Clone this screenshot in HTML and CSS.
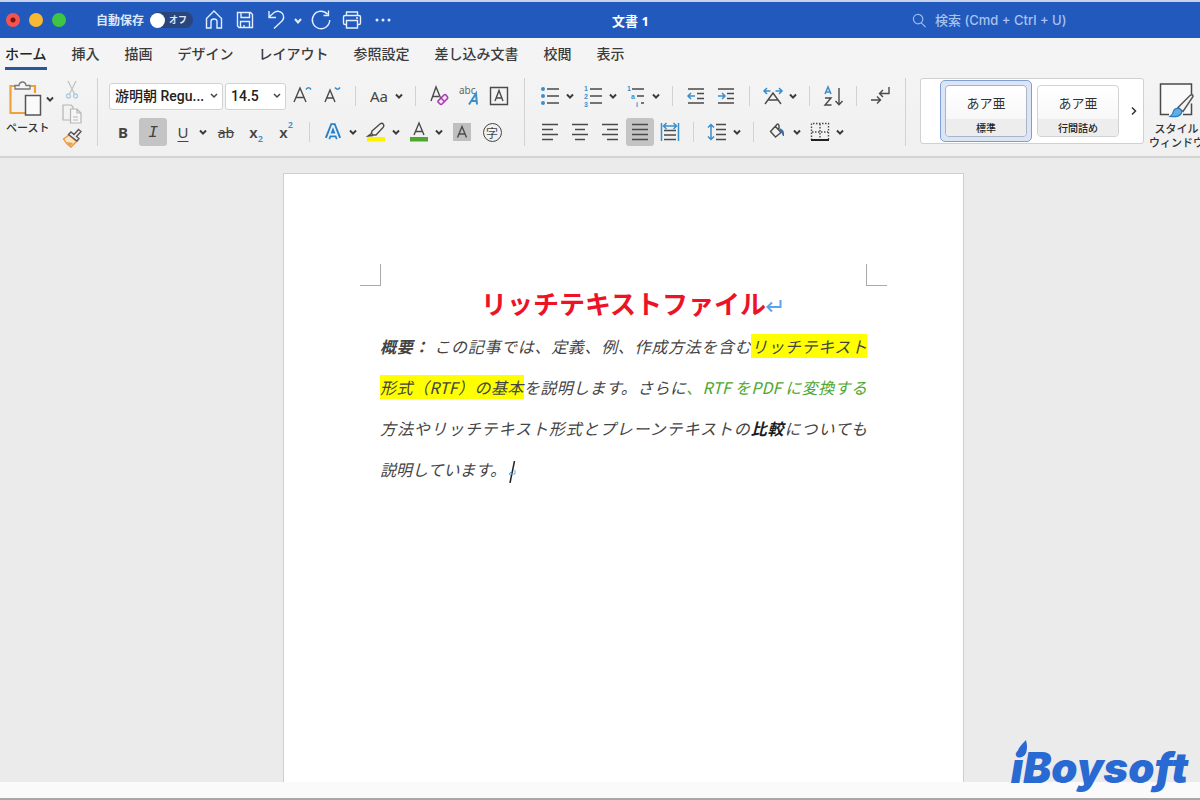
FILE: index.html
```html
<!DOCTYPE html>
<html lang="ja">
<head>
<meta charset="utf-8">
<title>文書 1</title>
<link rel="stylesheet" href="styles.css">
</head>
<body>
<svg class="defs" aria-hidden="true">
  <symbol id="chev" viewBox="-6 -14 12 28"><path d="M-3 -1.5L0 1.6L3 -1.5" fill="none" stroke="#3a3a3a" stroke-width="2"/></symbol>
</svg>

<header class="titlebar">
  <div class="lights">
    <button class="light red" aria-label="閉じる"></button>
    <button class="light yellow" aria-label="しまう"></button>
    <button class="light green" aria-label="拡大"></button>
  </div>
  <label class="autosave">自動保存
    <span class="switch"><input type="checkbox" role="switch"><span class="off">オフ</span></span>
  </label>
  <div class="quick">
    <button class="q" aria-label="ホーム"><svg viewBox="-12 -12 24 24"><path d="M-7.5 8V-1.5L0 -9L7.5 -1.5V8H3V1.5Q3 -1 0 -1Q-3 -1 -3 1.5V8Z"/></svg></button>
    <button class="q" aria-label="保存"><svg viewBox="-12 -12 24 24"><path d="M-7.5 -7.5H5.5L7.5 -5.5V7.5H-6L-7.5 6ZM-4 -7.5V-2.5H4.5V-7.5M-4.5 7.5V1.5H4.5V7.5M-1 7V5"/></svg></button>
    <button class="q" aria-label="元に戻す"><svg viewBox="-12 -12 24 24"><path d="M-7 -9V-2.5H0M-7 -3L-2 -7.5Q3 -10.5 6.500 -6.500Q9 -2.500 6 1L-2 8.5"/></svg></button>
    <button class="q narrow" aria-label="元に戻すの履歴"><svg viewBox="-6 -12 12 24"><path class="thick" d="M-3 -1L0 2.5L3 -1"/></svg></button>
    <button class="q" aria-label="やり直し"><svg viewBox="-12 -12 24 24"><path d="M6.500 -5.800A8.700 8.700 0 1 0 8.700 0M7.5 -9.500V-4.500H2.5"/></svg></button>
    <button class="q" aria-label="印刷"><svg viewBox="-12 -12 24 24"><path d="M-5.5 -4.5V-8H5.5V-4.5M-5.5 4.5H-7Q-8.5 4.5 -8.5 3V-3Q-8.5 -4.5 -7 -4.5H7Q8.5 -4.5 8.5 -3V3Q8.5 4.5 7 4.5H5.5M-5.5 0.5H5.5V8H-5.5ZM4 -2H6"/></svg></button>
    <button class="q" aria-label="その他"><svg viewBox="-12 -12 24 24"><g class="dots"><circle cx="-6" r="1.5"/><circle r="1.5"/><circle cx="6" r="1.5"/></g></svg></button>
  </div>
  <h1 class="doc-name">文書 1</h1>
  <div class="search">
    <svg viewBox="0 0 16 16" aria-hidden="true"><path d="M1.5 6.5A5 5 0 1 0 11.5 6.5A5 5 0 1 0 1.5 6.5M10 10.5L14.5 15"/></svg>
    <input type="search" aria-label="検索" placeholder="検索 (Cmd + Ctrl + U)">
  </div>
</header>

<nav class="tabs">
  <button class="tab active">ホーム</button>
  <button class="tab">挿入</button>
  <button class="tab">描画</button>
  <button class="tab">デザイン</button>
  <button class="tab">レイアウト</button>
  <button class="tab">参照設定</button>
  <button class="tab">差し込み文書</button>
  <button class="tab">校閲</button>
  <button class="tab">表示</button>
</nav>

<section class="ribbon" aria-label="ホーム">
  <div class="clipboard">
    <button class="paste">
      <span class="paste-icons">
        <svg class="paste-icon" viewBox="0 0 34 36"><path d="M9 5H1.5V32H17M19 5H26V12" fill="none" stroke="#f0a13c" stroke-width="2.2"/><path d="M6 8V4.5H10Q10.5 1 13.5 1Q16.5 1 17 4.5H21V8Z" fill="#f5f5f5" stroke="#777" stroke-width="1.3"/><path d="M16.5 14.5H31.5V34H16.5Z" fill="#fafafa" stroke="#555" stroke-width="1.5"/></svg>
        <svg class="chev"><use href="#chev"/></svg>
      </span>
      <span>ペースト</span>
    </button>
    <div class="clip-col">
      <button class="clip" aria-label="切り取り"><svg viewBox="-10 -10 20 20"><path d="M-4 -9L3 5M4 -9L-3 5" fill="none" stroke="#c3c3c3" stroke-width="1.3"/><circle cx="-3.5" cy="6" r="2" fill="none" stroke="#a9cde0" stroke-width="1.3"/><circle cx="3.5" cy="6" r="2" fill="none" stroke="#a9cde0" stroke-width="1.3"/></svg></button>
      <button class="clip" aria-label="コピー"><svg viewBox="-10 -10 20 20"><path d="M-2 6H-9V-9H-1L1 -7V-5" fill="none" stroke="#b5b5b5" stroke-width="1.2"/><path d="M-1.5 -5H5L9 -1V9H-1.5ZM5 -5V-1H9M1 3H6M1 6H6" fill="#f6f6f6" stroke="#b5b5b5" stroke-width="1.2"/></svg></button>
      <button class="clip" aria-label="書式のコピー"><svg viewBox="-10 -10 20 20"><path d="M-8.5 1L-3 -3L4.5 3.5L-1 9Q-6 6 -8.5 1Z" fill="#fbe5c8" stroke="#ee9a43" stroke-width="1.5"/><path d="M-5.5 4L1 5L-1.5 8Z" fill="#ee9a43"/><path d="M-3.5 -3.5L-1 -6L2 -3.5L6.5 -8.5L9 -6.5L4.5 -1.5L7 0.5L5 3Z" fill="#eee" stroke="#555" stroke-width="1.4"/></svg></button>
    </div>
  </div>
  <div class="divider"></div>

  <div class="group">
    <div class="row">
      <select class="box font" aria-label="フォント"><option>游明朝 Regu...</option></select>
      <select class="box size" aria-label="フォント サイズ"><option>14.5</option></select>
      <button class="ic" aria-label="フォントの拡大"><svg viewBox="-14 -14 28 28"><path class="k" d="M-8 6L-2 -8L4 6M-6 1.5H2"/><path class="b" d="M4 -6.5Q6.5 -10 9 -6.5"/></svg></button>
      <button class="ic" aria-label="フォントの縮小"><svg viewBox="-14 -14 28 28"><path class="k" d="M-7 6L-2 -6L3 6M-5 2H1"/><path class="b" d="M3 -8.5Q5.5 -5 8 -8.5"/></svg></button>
      <span class="sep"></span>
      <span class="split"><button class="ic case" aria-label="文字種の変換">Aa</button><button class="ch" aria-label="文字種の一覧"><svg class="chev"><use href="#chev"/></svg></button></span>
      <span class="sep"></span>
      <button class="ic" aria-label="書式のクリア"><svg viewBox="-14 -14 28 28"><path class="k" d="M-8 5L-3 -9L2 3M-6 0.5H0"/><path d="M-1 5L5 -1Q6 -2 7 -1L8.5 1Q9 2 8.5 2.5L3 8Q2 9 1 8L-1 6Z" fill="#f5e6f7" stroke="#a83cb4" stroke-width="1.6"/><path d="M2 2L5.5 5.5" stroke="#a83cb4" stroke-width="1.5"/></svg></button>
      <button class="ic" aria-label="ふりがな"><svg viewBox="-14 -14 28 28"><text x="-10" y="-2" class="abc">abc</text><path d="M0 8.5L7 -2.5L8 8.5M3 5H8" fill="none" stroke="#3a8fcb" stroke-width="2"/></svg></button>
      <button class="ic" aria-label="囲み線"><svg viewBox="-14 -14 28 28"><path class="k" d="M-8.5 -8.5H8.5V8.5H-8.5ZM-4 5L0 -5.5L4 5M-2.5 2H2.5"/></svg></button>
    </div>
    <div class="row">
      <button class="ic bold">B</button>
      <button class="ic on ital">I</button>
      <span class="split"><button class="ic under">U</button><button class="ch" aria-label="下線の種類"><svg class="chev"><use href="#chev"/></svg></button></span>
      <button class="ic strike">ab</button>
      <button class="ic script">x<sub>2</sub></button>
      <button class="ic script">x<sup>2</sup></button>
      <span class="sep"></span>
      <span class="split"><button class="ic" aria-label="文字の効果"><svg viewBox="-14 -14 28 28"><path d="M-5.5 6.5L-0.500 -6H0.500L5.5 6.5M-3 2.5H3" fill="none" stroke="#2f7fc4" stroke-width="5.500"/><path d="M-5.5 7L-0.500 -6H0.500L5.5 7M-3.500 2.5H3.500" fill="none" stroke="#e9f3fc" stroke-width="1.800"/></svg></button><button class="ch" aria-label="効果の一覧"><svg class="chev"><use href="#chev"/></svg></button></span>
      <span class="split"><button class="ic" aria-label="蛍光ペン"><svg viewBox="-14 -14 28 28"><path d="M-9 5H9V9.5H-9Z" fill="#fff200"/><path class="k" d="M-4 -1L4 -8Q6 -9.5 7.5 -7.5Q8.5 -6 7 -4.5L0 3L-3.5 3L-4.5 1ZM-4 1L-8 4L-3 3.5"/></svg></button><button class="ch" aria-label="蛍光ペンの色"><svg class="chev"><use href="#chev"/></svg></button></span>
      <span class="split"><button class="ic" aria-label="フォントの色"><svg viewBox="-14 -14 28 28"><path d="M-9 5H9V9.5H-9Z" fill="#4ea72e"/><path class="k" d="M-5 3L0 -9L5 3M-3.5 -0.5H3.5"/></svg></button><button class="ch" aria-label="色の一覧"><svg class="chev"><use href="#chev"/></svg></button></span>
      <button class="ic" aria-label="文字の網かけ"><svg viewBox="-14 -14 28 28"><path d="M-9 -9H9V9H-9Z" fill="#bfbfbf"/><path class="k" d="M-4.5 5.5L0 -5.5L4.5 5.5M-3 2H3"/></svg></button>
      <button class="ic ring" aria-label="囲い文字"><span>字</span></button>
    </div>
  </div>
  <div class="divider"></div>

  <div class="group">
    <div class="row">
      <span class="split"><button class="ic" aria-label="箇条書き"><svg viewBox="-14 -14 28 28"><path class="k" d="M-3 -7H9M-3 0H9M-3 7H9"/><g fill="#3a8fcb"><circle cx="-7" cy="-7" r="2"/><circle cx="-7" r="2"/><circle cx="-7" cy="7" r="2"/></g></svg></button><button class="ch" aria-label="行頭文字"><svg class="chev"><use href="#chev"/></svg></button></span>
      <span class="split"><button class="ic" aria-label="段落番号"><svg viewBox="-14 -14 28 28"><path class="k" d="M-3 -7H9M-3 0H9M-3 7H9"/><g class="num"><text x="-9" y="-5">1</text><text x="-9" y="3">2</text><text x="-9" y="11">3</text></g></svg></button><button class="ch" aria-label="番号の種類"><svg class="chev"><use href="#chev"/></svg></button></span>
      <span class="split"><button class="ic" aria-label="アウトライン"><svg viewBox="-14 -14 28 28"><path class="k" d="M-4 -7H8M1 0H8M5 7H8"/><g class="num"><text x="-9" y="-5">1</text><text x="-5" y="3">a</text><text x="0" y="11">i</text></g></svg></button><button class="ch" aria-label="リスト"><svg class="chev"><use href="#chev"/></svg></button></span>
      <span class="sep"></span>
      <button class="ic" aria-label="インデントを減らす"><svg viewBox="-14 -14 28 28"><path class="k" d="M-8 -7H8M1 -2.5H8M1 2.5H8M-8 7H8"/><path class="b" d="M-1 0H-8M-5 -3L-8 0L-5 3"/></svg></button>
      <button class="ic" aria-label="インデントを増やす"><svg viewBox="-14 -14 28 28"><path class="k" d="M-8 -7H8M1 -2.5H8M1 2.5H8M-8 7H8"/><path class="b" d="M-8 0H-1M-4 -3L-1 0L-4 3"/></svg></button>
      <span class="sep"></span>
      <span class="split"><button class="ic" aria-label="拡張書式"><svg viewBox="-14 -14 28 28"><path class="k" d="M-8 8L0 -3L8 8M-4.5 4H4.5"/><path class="b" d="M-2.5 -5H-8M-6 -8L-9 -5L-6 -2M2.5 -5H8M6 -8L9 -5L6 -2"/></svg></button><button class="ch" aria-label="拡張書式の一覧"><svg class="chev"><use href="#chev"/></svg></button></span>
      <span class="sep"></span>
      <button class="ic" aria-label="並べ替え"><svg viewBox="-14 -14 28 28"><path class="b" d="M-8 -2L-5 -9L-2 -2M-7 -4H-3"/><path class="k" d="M-8 2H-2L-8 9H-1.5M6 -8V8.5M2.5 5L6 8.8L9.5 5"/></svg></button>
      <span class="sep"></span>
      <button class="ic" aria-label="編集記号"><svg viewBox="-14 -14 28 28"><path class="k" d="M9 -9V-2.5H0M3 -6L-0.5 -2.5L3 1M-9 4H0M-3 0.5L0.5 4L-3 7.5"/></svg></button>
    </div>
    <div class="row">
      <button class="ic" aria-label="左揃え"><svg viewBox="-14 -14 28 28"><path class="k" d="M-8 -7.5H8M-8 -2.5H3M-8 2.5H8M-8 7.5H3"/></svg></button>
      <button class="ic" aria-label="中央揃え"><svg viewBox="-14 -14 28 28"><path class="k" d="M-8 -7.5H8M-5 -2.5H5M-8 2.5H8M-5 7.5H5"/></svg></button>
      <button class="ic" aria-label="右揃え"><svg viewBox="-14 -14 28 28"><path class="k" d="M-8 -7.5H8M-3 -2.5H8M-8 2.5H8M-3 7.5H8"/></svg></button>
      <button class="ic on" aria-label="両端揃え"><svg viewBox="-14 -14 28 28"><path class="k" d="M-8 -7.5H8M-8 -2.5H8M-8 2.5H8M-8 7.5H8"/></svg></button>
      <button class="ic" aria-label="均等割り付け"><svg viewBox="-14 -14 28 28"><path class="k" d="M-6 -1.5H6M-6 3H6M-6 7.5H6"/><path class="b" d="M-8.5 -9V9M8.5 -9V9M-6.5 -6H6.5M-3.5 -9L-6.5 -6L-3.5 -3M3.5 -9L6.5 -6L3.5 -3"/></svg></button>
      <span class="sep"></span>
      <span class="split"><button class="ic" aria-label="行間"><svg viewBox="-14 -14 28 28"><path class="k" d="M-1 -7.5H9M-1 -2.5H9M-1 2.5H9M-1 7.5H9"/><path class="b" d="M-6 -7.5V7.5M-9 -4.5L-6 -7.5L-3 -4.5M-9 4.5L-6 7.5L-3 4.5"/></svg></button><button class="ch" aria-label="行間の一覧"><svg class="chev"><use href="#chev"/></svg></button></span>
      <span class="sep"></span>
      <span class="split"><button class="ic" aria-label="網かけ"><svg viewBox="-14 -14 28 28"><path class="k" d="M-2 -6L4 0.5L-1.5 5L-6.5 -0.5L-1 -6.5Q1 -9.5 2 -6.5V-3"/><path d="M3 -3Q7 -3 6.5 4Q5.5 1 3 -1Z" fill="#3a6ea5" stroke="#3a6ea5"/></svg></button><button class="ch" aria-label="網かけの色"><svg class="chev"><use href="#chev"/></svg></button></span>
      <span class="split"><button class="ic" aria-label="罫線"><svg viewBox="-14 -14 28 28"><path class="k" stroke-dasharray="1.5 1.5" d="M-8.5 8V-8.5H8.5V8M0 -8V8M-8 0H8"/><path d="M-9 8H9" stroke="#222" stroke-width="2"/></svg></button><button class="ch" aria-label="罫線の種類"><svg class="chev"><use href="#chev"/></svg></button></span>
    </div>
  </div>
  <div class="divider"></div>

  <div class="gallery">
    <button class="style selected"><span class="card"><span class="sample">あア亜</span><span class="name">標準</span></span></button>
    <button class="style"><span class="card"><span class="sample">あア亜</span><span class="name">行間詰め</span></span></button>
    <button class="more" aria-label="次のスタイル"><svg viewBox="0 0 8 10"><path d="M2 1.5L5.5 5L2 8.5" fill="none" stroke="#333" stroke-width="1.5"/></svg></button>
  </div>
  <button class="pane">
    <svg viewBox="0 0 38 38"><path d="M33.500 14V2.5H2.5V33H11M33.500 22V33H25" fill="#fafafa" stroke="#4a4a4a" stroke-width="1.5"/><path d="M20 26L32 14Q35 12 35 15L25 30Z" fill="#f4f4f4" stroke="#555" stroke-width="1.5"/><path d="M12 35Q15 33 15.5 29.5Q17 26 21 27Q25 29 23 32.5Q20 36 12 35Z" fill="#62aee8" stroke="#2c7cc0" stroke-width="1.2"/></svg>
    <span>スタイル<br>ウィンドウ</span>
  </button>
</section>

<main class="workspace">
  <article class="page">
    <div class="crops"><span class="crop left"></span><span class="crop right"></span></div>
    <div class="body">
      <h2>リッチテキストファイル<svg class="ret" viewBox="0 0 16 16" aria-hidden="true"><path d="M14.5 2V9H2M6 4.5L1.5 9L6 13.5"/></svg></h2>
      <p><b>概要：</b> この記事では、定義、例、作成方法を含む<mark>リッチテキスト</mark><br><mark>形式（RTF）の基本</mark>を説明します。さらに<span class="link">、RTF をPDF に変換する</span><br>方法やリッチテキスト形式とプレーンテキストの<b class="dark">比較</b>についても</p>
      <p class="last">説明しています。<svg class="caret" viewBox="0 0 12 22" aria-hidden="true"><path d="M8.5 0L4 22" stroke="#222" stroke-width="1.5"/><path d="M9 9V13H3M5 11L3 13L5 15" fill="none" stroke="#67aee6"/></svg></p>
    </div>
  </article>
  <div class="logo"><svg viewBox="0 0 12 18" aria-hidden="true"><path d="M10 0Q12 8 10 13Q8 17.5 4 16Q0 14 2.5 9Q4 6 10 0Z" fill="#2869d2"/></svg>iBoysoft</div>
</main>
<footer class="status"></footer>
</body>
</html>
```
FILE: styles.css
```css
* { box-sizing: border-box; }
body {
  margin: 0; height: 100vh; overflow: hidden;
  display: flex; flex-direction: column;
  font-family: "Noto Sans", "Noto Sans CJK JP", sans-serif;
  font-size: 12px; color: #333; background: #ebebeb;
}
button { border: 0; padding: 0; background: none; font: inherit; color: inherit; }
button svg { display: block; }
.defs { position: absolute; width: 0; height: 0; }

.titlebar {
  flex: none; height: 38px; border-top: 2px solid #c5d2ea;
  display: flex; align-items: center; background: #2159bd; color: #fff;
}
.lights { display: flex; gap: 9px; padding-left: 6px; }
.light { width: 14px; height: 14px; border-radius: 50%; }
.red { background: radial-gradient(circle, #7c0f10 2px, #f5544e 3px); }
.yellow { background: #f8b932; }
.green { background: #3fc544; }
.autosave {
  display: flex; align-items: center; gap: 6px; margin-left: 30px;
  font: 700 12px/16px "Noto Sans CJK JP", sans-serif; color: #dce7fa;
}
.switch {
  display: flex; align-items: center; width: 43px; height: 16px;
  border-radius: 8px; background: #29457c;
}
.switch input { appearance: none; margin: 0; width: 15px; height: 15px; border-radius: 50%; background: #fff; }
.off { font-size: 9px; margin-left: 4px; }
.quick { display: flex; align-items: center; gap: 7px; margin-left: 9px; }
.q { width: 24px; height: 24px; }
.q.narrow { width: 12px; margin: 0 -2px 0 -3px; }
.q path { fill: none; stroke: #e4eefd; stroke-width: 1.4; }
.q path.thick { stroke-width: 2; }
.dots { fill: #e4eefd; }
.doc-name { flex: 1; margin: 0 46px 0 0; text-align: center; font: 700 13px "Noto Sans", "Noto Sans CJK JP", sans-serif; }
.search { width: 288px; display: flex; align-items: center; gap: 8px; }
.search svg { width: 15px; height: 15px; flex: none; }
.search path { fill: none; stroke: #9bbaeb; stroke-width: 1.3; }
.search input {
  flex: 1; min-width: 0; padding: 0; border: 0; outline: 0; background: none;
  font: 500 13px Inter, "Noto Sans CJK JP", sans-serif; color: #fff;
}
.search input::placeholder { color: #a9c3ee; opacity: 1; }

.tabs { flex: none; height: 34px; display: flex; gap: 25px; padding-left: 5px; background: #f4f4f4; }
.tab {
  height: 32px; border-bottom: 3px solid transparent; white-space: nowrap;
  font: 500 14px "Noto Sans CJK JP", sans-serif; color: #3b3b3b;
}
.tab.active { border-color: #2b579a; color: #222; }

.ribbon {
  flex: none; display: flex; height: 86px; background: linear-gradient(#f4f4f4, #f0f0f0);
  border-bottom: 2px solid #d4d4d4; overflow: hidden;
}
.divider { flex: none; width: 1px; margin: 6px 11px 10px; background: #d2d2d2; }
.clipboard { flex: none; display: flex; width: 86px; padding-top: 8px; }
.paste {
  width: 58px; padding-left: 6px; display: flex; flex-direction: column;
  align-items: flex-start; justify-content: flex-start;
  font-size: 11px; line-height: 20px; font-weight: 500; white-space: nowrap;
}
.paste-icons { display: flex; align-items: center; gap: 1px; padding-left: 3px; }
.paste-icon { width: 34px; height: 38px; }
.chev { width: 12px; height: 28px; }
.clip-col { display: flex; flex-direction: column; gap: 4px; padding-left: 4px; }
.clip { width: 20px; height: 20px; }

.group { flex: none; display: flex; flex-direction: column; gap: 8px; padding-top: 10px; }
.row { display: flex; align-items: center; gap: 2px; height: 28px; }
.split { display: flex; }
.ic { width: 28px; height: 28px; display: flex; align-items: center; justify-content: center; color: #444; font-size: 15px; }
.ic svg { width: 28px; height: 28px; }
.ch { width: 13px; height: 28px; }
.on { background: #c4c4c4; border-radius: 3px; }
.sep { width: 1px; height: 20px; margin: 0 7px; background: #d2d2d2; }
.k { fill: none; stroke: #4a4a4a; stroke-width: 1.4; }
.b { fill: none; stroke: #3a8fcb; stroke-width: 1.5; }
.box {
  height: 27px; border: 1px solid #d3d3d3; border-radius: 3px; padding: 0 5px;
  appearance: none; color: #222;
  font: 500 14px Roboto, "Noto Sans CJK JP", sans-serif;
  background: #fff url("data:image/svg+xml,%3Csvg xmlns='http://www.w3.org/2000/svg' width='8' height='6'%3E%3Cpath d='M1 1L4 4L7 1' fill='none' stroke='%23444' stroke-width='1.5'/%3E%3C/svg%3E") no-repeat right 4px center;
}
.font { width: 114px; }
.size { width: 61px; }
.case { font-size: 15px; }
.abc { font: 10px "Noto Sans", sans-serif; fill: #666; }
.num { font: 700 7px "Liberation Sans", sans-serif; fill: #3a8fcb; }
.bold { font-weight: 700; }
.ital { font-family: "Liberation Mono", monospace; font-style: italic; font-size: 17px; }
.under { text-decoration: underline; text-underline-offset: 3px; }
.strike { text-decoration: line-through; font-size: 14px; }
.script { font-weight: 600; font-size: 15px; }
.script sub, .script sup { font-size: 9px; color: #3a8fcb; line-height: 1; }
.script sub { align-self: flex-end; margin-bottom: 3px; }
.script sup { align-self: flex-start; margin-top: 2px; }
.ring span {
  width: 19px; height: 19px; border: 1px solid #444; border-radius: 50%;
  font: 12px/17px "Noto Sans CJK JP", sans-serif; text-align: center;
}

.gallery {
  flex: none; width: 224px; height: 66px; margin: 6px 0 0 3px; padding-left: 19px;
  display: flex; align-items: center; border: 1px solid #d0d0d0; border-radius: 3px; background: #fff;
}
.style { width: 92px; height: 62px; padding: 4px; border: 1px solid transparent; border-radius: 5px; }
.selected { border-color: #7f9fd3; background: #dbe5f6; }
.card {
  display: flex; flex-direction: column; height: 52px; overflow: hidden;
  border: 1px solid #d2d2d2; border-radius: 4px; background: linear-gradient(#fff, #f4f4f4);
}
.selected .card { border-color: #a9b4c6; }
.sample { flex: 1; font: 13px/33px "Noto Sans CJK JP", sans-serif; }
.name { font: 500 10px/17px "Noto Sans CJK JP", sans-serif; background: #ededed; color: #222; }
.more { width: 16px; display: flex; justify-content: center; margin-left: 2px; }
.more svg { width: 8px; height: 10px; }
.pane {
  flex: none; margin-left: 5px; display: flex; flex-direction: column; align-items: center;
  justify-content: flex-start; padding-top: 8px; font: 500 11px/14px "Noto Sans CJK JP", sans-serif;
}
.pane svg { width: 38px; height: 41px; }

.workspace { flex: 1; min-height: 0; display: flex; justify-content: center; padding: 15px 0 0 47px; position: relative; }
.page { width: 681px; border: 1px solid #cfcfcf; border-bottom: 0; background: #fff; padding: 90px 76px 0; }
.crops { display: flex; justify-content: space-between; }
.crop { width: 21px; height: 22px; border-bottom: 1px solid #aaa; }
.crop.left { border-right: 1px solid #aaa; }
.crop.right { border-left: 1px solid #aaa; }
.body { padding: 0 20px; font-family: "Noto Sans CJK JP", sans-serif; }
h2 { margin: 0 0 6px; font-size: 26px; line-height: 34px; text-align: center; color: #ed1226; white-space: nowrap; }
.ret { width: 16px; height: 16px; margin-right: -16px; }
.ret path { fill: none; stroke: #58a5ea; stroke-width: 2; }
.body p {
  margin: 0; font-size: 16px; line-height: 41px; font-style: italic; color: #444;
  text-align-last: justify; white-space: nowrap;
}
.body p.last { text-align-last: left; }
mark { background: #ff0; color: inherit; }
.link { color: #4ea72e; }
.dark { color: #1d1d22; }
.caret { width: 12px; height: 22px; vertical-align: middle; }
.logo {
  position: absolute; right: 12px; bottom: -16px;
  font: italic 900 42px/60px Inter, sans-serif; color: #2869d2;
}
.logo svg { position: absolute; left: 5px; top: 2px; width: 12px; height: 18px; }
.status { flex: none; height: 18px; background: #fafafa; border-bottom: 2px solid #a8a8a8; }
```
